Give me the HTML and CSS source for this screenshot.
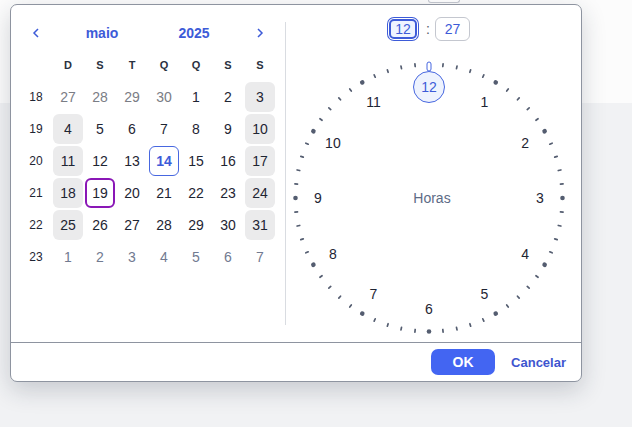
FILE: index.html
```html
<!DOCTYPE html>
<html>
<head>
  <meta charset="UTF-8">
  <title>Seletor de data e hora</title>
  <link rel="stylesheet" href="styles.css">
</head>
<body>
  <!-- Page behind the overlay -->
  <div class="page-top">
    <div class="anchor-field"></div>
  </div>

  <!-- Date-time picker overlay -->
  <div class="picker">
    <div class="picker-body">
      <!-- Calendar -->
      <div class="calendar">
        <div class="cal-grid">
          <div class="nav">
            <svg width="8" height="10" viewBox="0 0 8 10"><polyline points="6,1 2,5 6,9" /></svg>
          </div>
          <div class="cal-title month">maio</div>
          <div class="cal-title year">2025</div>
          <div class="nav">
            <svg width="8" height="10" viewBox="0 0 8 10"><polyline points="2,1 6,5 2,9" /></svg>
          </div>

          <div></div>
          <div class="dow">D</div><div class="dow">S</div><div class="dow">T</div><div class="dow">Q</div>
          <div class="dow">Q</div><div class="dow">S</div><div class="dow">S</div>

          <div class="week">18</div>
          <div class="day other">27</div><div class="day other">28</div><div class="day other">29</div>
          <div class="day other">30</div><div class="day">1</div><div class="day">2</div>
          <div class="day weekend">3</div>

          <div class="week">19</div>
          <div class="day weekend">4</div><div class="day">5</div><div class="day">6</div>
          <div class="day">7</div><div class="day">8</div><div class="day">9</div>
          <div class="day weekend">10</div>

          <div class="week">20</div>
          <div class="day weekend">11</div><div class="day">12</div><div class="day">13</div>
          <div class="day today">14</div><div class="day">15</div><div class="day">16</div>
          <div class="day weekend">17</div>

          <div class="week">21</div>
          <div class="day weekend">18</div><div class="day selected">19</div><div class="day">20</div>
          <div class="day">21</div><div class="day">22</div><div class="day">23</div>
          <div class="day weekend">24</div>

          <div class="week">22</div>
          <div class="day weekend">25</div><div class="day">26</div><div class="day">27</div>
          <div class="day">28</div><div class="day">29</div><div class="day">30</div>
          <div class="day weekend">31</div>

          <div class="week">23</div>
          <div class="day next">1</div><div class="day next">2</div><div class="day next">3</div>
          <div class="day next">4</div><div class="day next">5</div><div class="day next">6</div>
          <div class="day next">7</div>
        </div>
      </div>

      <div class="divider"></div>

      <!-- Clock -->
      <div class="clock-pane">
        <div class="time-row">
          <div class="time-field active">12</div>
          <span class="colon">:</span>
          <div class="time-field">27</div>
        </div>

        <svg class="dial" width="276" height="276" viewBox="0 0 276 276">
          <defs>
            <line id="tk" x1="138" y1="3.2" x2="138" y2="5.8" class="tick" />
            <circle id="dt" cx="138" cy="4.5" r="2.3" class="dot" />
          </defs>

          <!-- minute ticks -->
          <use href="#tk" transform="rotate(6 138 138)"/><use href="#tk" transform="rotate(12 138 138)"/>
          <use href="#tk" transform="rotate(18 138 138)"/><use href="#tk" transform="rotate(24 138 138)"/>
          <use href="#tk" transform="rotate(36 138 138)"/><use href="#tk" transform="rotate(42 138 138)"/>
          <use href="#tk" transform="rotate(48 138 138)"/><use href="#tk" transform="rotate(54 138 138)"/>
          <use href="#tk" transform="rotate(66 138 138)"/><use href="#tk" transform="rotate(72 138 138)"/>
          <use href="#tk" transform="rotate(78 138 138)"/><use href="#tk" transform="rotate(84 138 138)"/>
          <use href="#tk" transform="rotate(96 138 138)"/><use href="#tk" transform="rotate(102 138 138)"/>
          <use href="#tk" transform="rotate(108 138 138)"/><use href="#tk" transform="rotate(114 138 138)"/>
          <use href="#tk" transform="rotate(126 138 138)"/><use href="#tk" transform="rotate(132 138 138)"/>
          <use href="#tk" transform="rotate(138 138 138)"/><use href="#tk" transform="rotate(144 138 138)"/>
          <use href="#tk" transform="rotate(156 138 138)"/><use href="#tk" transform="rotate(162 138 138)"/>
          <use href="#tk" transform="rotate(168 138 138)"/><use href="#tk" transform="rotate(174 138 138)"/>
          <use href="#tk" transform="rotate(186 138 138)"/><use href="#tk" transform="rotate(192 138 138)"/>
          <use href="#tk" transform="rotate(198 138 138)"/><use href="#tk" transform="rotate(204 138 138)"/>
          <use href="#tk" transform="rotate(216 138 138)"/><use href="#tk" transform="rotate(222 138 138)"/>
          <use href="#tk" transform="rotate(228 138 138)"/><use href="#tk" transform="rotate(234 138 138)"/>
          <use href="#tk" transform="rotate(246 138 138)"/><use href="#tk" transform="rotate(252 138 138)"/>
          <use href="#tk" transform="rotate(258 138 138)"/><use href="#tk" transform="rotate(264 138 138)"/>
          <use href="#tk" transform="rotate(276 138 138)"/><use href="#tk" transform="rotate(282 138 138)"/>
          <use href="#tk" transform="rotate(288 138 138)"/><use href="#tk" transform="rotate(294 138 138)"/>
          <use href="#tk" transform="rotate(306 138 138)"/><use href="#tk" transform="rotate(312 138 138)"/>
          <use href="#tk" transform="rotate(318 138 138)"/><use href="#tk" transform="rotate(324 138 138)"/>
          <use href="#tk" transform="rotate(336 138 138)"/><use href="#tk" transform="rotate(342 138 138)"/>
          <use href="#tk" transform="rotate(348 138 138)"/><use href="#tk" transform="rotate(354 138 138)"/>

          <!-- hour dots -->
          <use href="#dt" transform="rotate(30 138 138)"/><use href="#dt" transform="rotate(60 138 138)"/>
          <use href="#dt" transform="rotate(90 138 138)"/><use href="#dt" transform="rotate(120 138 138)"/>
          <use href="#dt" transform="rotate(150 138 138)"/><use href="#dt" transform="rotate(180 138 138)"/>
          <use href="#dt" transform="rotate(210 138 138)"/><use href="#dt" transform="rotate(240 138 138)"/>
          <use href="#dt" transform="rotate(270 138 138)"/><use href="#dt" transform="rotate(300 138 138)"/>
          <use href="#dt" transform="rotate(330 138 138)"/>

          <!-- hand marker -->
          <rect x="136" y="2" width="4" height="9" rx="2" class="hand" />
          <circle cx="138" cy="27" r="15.5" class="hour-sel" />

          <!-- hour numbers -->
          <text x="138" y="27" class="num sel">12</text>
          <text x="193.5" y="41.9" class="num">1</text>
          <text x="234.1" y="82.5" class="num">2</text>
          <text x="249" y="138" class="num">3</text>
          <text x="234.1" y="193.5" class="num">4</text>
          <text x="193.5" y="234.1" class="num">5</text>
          <text x="138" y="249" class="num">6</text>
          <text x="82.5" y="234.1" class="num">7</text>
          <text x="41.9" y="193.5" class="num">8</text>
          <text x="27" y="138" class="num">9</text>
          <text x="41.9" y="82.5" class="num">10</text>
          <text x="82.5" y="41.9" class="num">11</text>

          <text x="141" y="138" class="label">Horas</text>
        </svg>
      </div>
    </div>

    <div class="picker-footer">
      <button class="btn-ok">OK</button>
      <button class="btn-cancel">Cancelar</button>
    </div>
  </div>
</body>
</html>
```

FILE: styles.css
```css
/* Page behind the overlay */
body {
  margin: 0;
  height: 427px;
  background: #f1f2f4;
  font-family: "Liberation Sans", Arial, sans-serif;
  position: relative;
  overflow: hidden;
}
.page-top {
  height: 103px;
  background: #fcfcfc;
}
.anchor-field {
  margin-left: 428px;
  width: 32px;
  height: 3px;
  border: 1px solid #c5c8d0;
  border-top: none;
  border-radius: 0 0 4px 4px;
  box-sizing: border-box;
  background: #fff;
}

/* Overlay */
.picker {
  position: absolute;
  left: 10px;
  top: 4px;
  width: 572px;
  height: 378px;
  box-sizing: border-box;
  background: #fff;
  border: 1px solid #8e94a0;
  border-radius: 7px;
  box-shadow: 0 8px 24px rgba(30, 40, 60, 0.2);
  display: flex;
  flex-direction: column;
}
.picker-body {
  display: flex;
  height: 337px;
}

/* Calendar */
.calendar {
  width: 274px;
  box-sizing: border-box;
  padding: 12px 9px 0 9px;
}
.cal-grid {
  display: grid;
  grid-template-columns: repeat(8, 32px);
  grid-auto-rows: 32px;
  color: #1e2533;
}
.nav {
  display: flex;
  align-items: center;
  justify-content: center;
}
.nav polyline {
  fill: none;
  stroke: #3d5bd8;
  stroke-width: 1.5;
}
.cal-title {
  grid-column: span 3;
  display: flex;
  align-items: center;
  justify-content: center;
  font-size: 14px;
  font-weight: bold;
  color: #3d5bd8;
}
.month {
  padding-left: 4px;
}
.year {
  padding-right: 4px;
}
.dow {
  display: flex;
  align-items: center;
  justify-content: center;
  font-size: 11px;
  font-weight: bold;
  color: #2a3140;
}
.week {
  display: flex;
  align-items: center;
  justify-content: center;
  font-size: 12px;
}
.day {
  margin: 1px;
  border-radius: 6px;
  display: flex;
  align-items: center;
  justify-content: center;
  font-size: 14px;
  box-sizing: border-box;
}
.day.weekend {
  background: #ebebec;
}
.day.other {
  color: #7a7d85;
}
.day.next {
  color: #717a90;
}
.day.today {
  border: 1px solid #4767e0;
  color: #3d5bd8;
  font-weight: bold;
}
.day.selected {
  border: 2px solid #8a17b6;
}

.divider {
  width: 1px;
  margin: 17px 0;
  background: #d9dce1;
}

/* Clock */
.clock-pane {
  flex: 1;
  display: flex;
  flex-direction: column;
  align-items: center;
  padding: 12px 10px 0 0;
}
.time-row {
  display: flex;
  align-items: center;
  height: 24px;
}
.time-field {
  width: 35px;
  height: 24px;
  box-sizing: border-box;
  border: 1px solid #c4c7cf;
  border-radius: 6px;
  display: flex;
  align-items: center;
  justify-content: center;
  font-size: 14px;
  color: #3d5bd8;
}
.time-field.active {
  width: 28px;
  height: 20px;
  margin: 0 2px;
  border: 2px solid #3d5bd8;
  border-radius: 5px;
  background: #eef3ff;
  box-shadow: 0 0 0 1px #fff, 0 0 0 2px #3d5bd8;
}
.colon {
  margin: 0 5px 0 7px;
  font-size: 14px;
  color: #555c6a;
}
.dial {
  margin-top: 19px;
}
.tick {
  stroke: #545d70;
  stroke-width: 1.7;
  stroke-linecap: round;
}
.dot {
  fill: #545d70;
}
.hand {
  fill: #fff;
  stroke: #4767e0;
  stroke-width: 1;
}
.hour-sel {
  fill: #eef3fe;
  stroke: #4767e0;
  stroke-width: 1;
}
.num {
  font-size: 14px;
  fill: #1e2533;
  text-anchor: middle;
  dominant-baseline: central;
}
.num.sel {
  fill: #3d5bd8;
}
.label {
  font-size: 14px;
  fill: #5d6b86;
  text-anchor: middle;
  dominant-baseline: central;
}

/* Footer */
.picker-footer {
  flex: 1;
  border-top: 1px solid #8e94a0;
  display: flex;
  align-items: center;
  justify-content: flex-end;
  gap: 16px;
  padding-right: 15px;
}
.btn-ok {
  width: 64px;
  height: 26px;
  border: none;
  border-radius: 7px;
  background: #4365f2;
  color: #fff;
  font-family: inherit;
  font-size: 14px;
  font-weight: bold;
}
.btn-cancel {
  border: none;
  background: none;
  padding: 0;
  color: #3e55cf;
  font-family: inherit;
  font-size: 13px;
  font-weight: bold;
}
```
